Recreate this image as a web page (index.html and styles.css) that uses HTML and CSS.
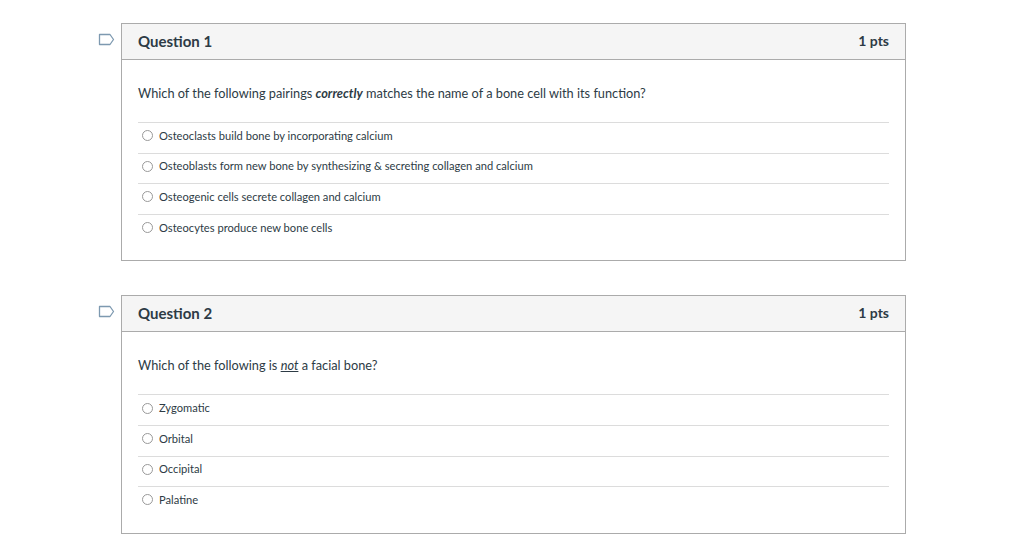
FILE: index.html
```html
<!DOCTYPE html>
<html lang="en">
<head>
    <meta charset="UTF-8">
    <meta name="viewport" content="width=device-width, initial-scale=1.0">
    <title>Quiz</title>
    <link rel="stylesheet" href="styles.css">
</head>
<body>
    <div class="quiz">
        <div class="question-row">
            <div class="flag">
                <svg width="17" height="13" viewBox="0 0 17 13">
                    <path d="M1.5 1.5 H12 L15.5 6.5 L12 11.5 H1.5 Z" fill="none" stroke="#7d99b0" stroke-width="1.3" stroke-linejoin="round"/>
                </svg>
            </div>
            <div class="question">
                <div class="question-header">
                    <span class="question-title">Question 1</span>
                    <span class="question-points">1 pts</span>
                </div>
                <div class="question-body">
                    <p class="question-text">Which of the following pairings <b><i>correctly</i></b> matches the name of a bone cell with its function?</p>
                    <div class="answers">
                        <label class="answer"><span class="radio"></span>Osteoclasts build bone by incorporating calcium</label>
                        <label class="answer"><span class="radio"></span>Osteoblasts form new bone by synthesizing &amp; secreting collagen and calcium</label>
                        <label class="answer"><span class="radio"></span>Osteogenic cells secrete collagen and calcium</label>
                        <label class="answer"><span class="radio"></span>Osteocytes produce new bone cells</label>
                    </div>
                </div>
            </div>
        </div>

        <div class="question-row">
            <div class="flag">
                <svg width="17" height="13" viewBox="0 0 17 13">
                    <path d="M1.5 1.5 H12 L15.5 6.5 L12 11.5 H1.5 Z" fill="none" stroke="#7d99b0" stroke-width="1.3" stroke-linejoin="round"/>
                </svg>
            </div>
            <div class="question">
                <div class="question-header">
                    <span class="question-title">Question 2</span>
                    <span class="question-points">1 pts</span>
                </div>
                <div class="question-body">
                    <p class="question-text">Which of the following is <u><i>not</i></u> a facial bone?</p>
                    <div class="answers">
                        <label class="answer"><span class="radio"></span>Zygomatic</label>
                        <label class="answer"><span class="radio"></span>Orbital</label>
                        <label class="answer"><span class="radio"></span>Occipital</label>
                        <label class="answer"><span class="radio"></span>Palatine</label>
                    </div>
                </div>
            </div>
        </div>
    </div>
</body>
</html>
```

FILE: styles.css
```css
body {
    margin: 0;
    font-family: Lato, "Liberation Sans", sans-serif;
    color: #2d3b45;
    background: #fff;
}

.quiz {
    padding: 23px 0 0 98px;
}

.question-row {
    display: flex;
    gap: 6px;
    margin-bottom: 34px;
}

.flag {
    width: 17px;
    padding-top: 10px;
}

.flag svg {
    display: block;
}

.question {
    width: 785px;
    border: 1px solid #ababab;
    box-sizing: border-box;
}

.question-header {
    display: flex;
    justify-content: space-between;
    align-items: center;
    box-sizing: border-box;
    height: 36px;
    padding: 0 16px 2px;
    background: #f5f5f5;
    border-bottom: 1px solid #ababab;
}

.question-title {
    font-size: 15px;
    font-weight: bold;
}

.question-points {
    font-size: 14px;
    font-weight: bold;
}

.question-body {
    padding: 24px 16px 16px;
}

.question-text {
    margin: 0 0 20px;
    font-size: 12.75px;
    line-height: 18px;
}

.question-text u {
    text-decoration-thickness: 1px;
}

.answer {
    display: flex;
    align-items: center;
    gap: 6px;
    box-sizing: border-box;
    height: 30.6px;
    padding: 5px 0 9px 4px;
    border-top: 1px solid #dcdcdc;
    font-size: 11.15px;
    line-height: 16px;
}

.radio {
    width: 9px;
    height: 9px;
    border: 1px solid #999;
    border-radius: 50%;
    flex-shrink: 0;
}
```
